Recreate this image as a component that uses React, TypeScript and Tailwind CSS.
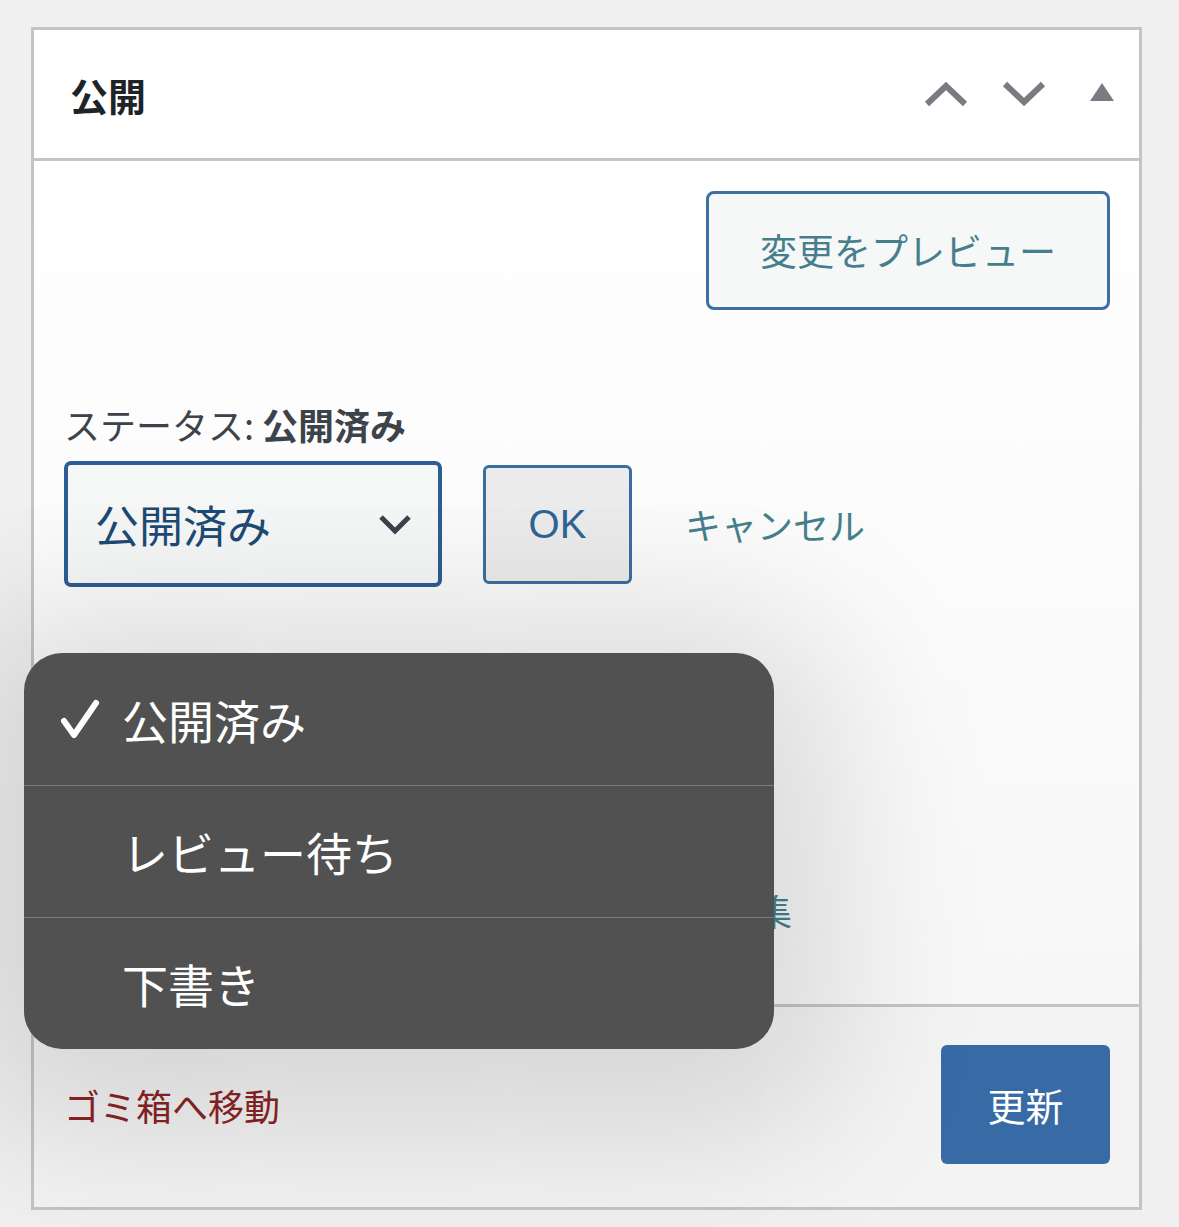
const jp = "font-['Noto_Sans_CJK_JP','Noto_Sans',sans-serif]";

const options = [
  { label: "公開済み", checked: true },
  { label: "レビュー待ち", checked: false },
  { label: "下書き", checked: false },
];

function Chevron({ up }: { up?: boolean }) {
  return (
    <svg width="44" height="28" viewBox="0 0 44 28" fill="none">
      <polyline
        points={up ? "3,24 22,6 41,24" : "3,4 22,22 41,4"}
        stroke="#787c82"
        strokeWidth="6"
        strokeLinejoin="miter"
      />
    </svg>
  );
}

export default function App() {
  return (
    <div className={`min-h-[1227px] bg-[#f0f0f1] pt-[27px] pl-[31px] ${jp}`}>
      <div className="relative w-[1111px] border-[3px] border-[#c3c4c7] bg-white">
        {/* Header */}
        <div className="flex h-[131px] items-center justify-between border-b-[3px] border-[#c3c4c7] pl-[36px] pr-[24px]">
          <h2 className="text-[38px] font-bold text-[#1d2327]">公開</h2>
          <div className="flex items-center">
            <Chevron up />
            <span className="ml-[34px]">
              <Chevron />
            </span>
            <svg className="ml-[43px] mb-[4px]" width="26" height="20" viewBox="0 0 26 20">
              <polygon points="13,1 25,19 1,19" fill="#787c82" />
            </svg>
          </div>
        </div>

        {/* Body */}
        <div className="h-[843px] bg-gradient-to-b from-white to-[#f7f7f7] pl-[30px] pr-[29px] pt-[30px]">
          <div className="flex justify-end">
            <button className="h-[119px] w-[404px] rounded-[8px] border-[3px] border-[#3e6fa0] bg-[#f6f7f7] text-[37px] text-[#457f8d]">
              変更をプレビュー
            </button>
          </div>

          <p className="mt-[92px] text-[36px] leading-[44px] text-[#3c434a]">
            ステータス: <span className="font-bold">公開済み</span>
          </p>

          <div className="mt-[15px] flex items-center">
            <div className="flex h-[126px] w-[378px] items-center justify-between rounded-[7px] border-[4px] border-[#2c5e93] bg-[#f6f7f7] pl-[27px] pr-[26px]">
              <span className="text-[44px] text-[#1d4a75]">公開済み</span>
              <svg width="34" height="22" viewBox="0 0 34 22" fill="none">
                <polyline points="3,4 17,18 31,4" stroke="#3c434a" strokeWidth="5" />
              </svg>
            </div>
            <button className="ml-[41px] h-[119px] w-[149px] rounded-[6px] border-[3px] border-[#3b6ea0] bg-[#ececec] font-['Liberation_Sans',sans-serif] text-[40px] text-[#2f6496]">
              OK
            </button>
            <a className="ml-[53px] text-[36px] text-[#457f8d]">キャンセル</a>
          </div>

          <div className="mt-[296px] flex pl-[656px]">
            <a className="text-[36px] text-[#457f8d]">編集</a>
          </div>
        </div>

        {/* Footer */}
        <div className="flex h-[203px] items-center justify-between border-t-[3px] border-[#c3c4c7] bg-[#f3f3f3] pl-[30px] pr-[29px] pb-[6px]">
          <a className="mt-[2px] text-[36px] text-[#8a2424]">ゴミ箱へ移動</a>
          <button className="h-[119px] w-[169px] rounded-[6px] bg-[#386ba6] text-[38px] text-white">更新</button>
        </div>

        {/* Native select menu */}
        <div className="absolute left-[-10px] top-[623px] w-[750px] overflow-hidden rounded-[38px] bg-[#515151] shadow-[0_20px_160px_60px_rgba(0,0,0,0.13)]">
          {options.map((o, i) => (
            <div
              key={o.label}
              className={`flex h-[132px] items-center ${i > 0 ? "border-t border-[#7d7d7d]" : ""}`}
            >
              <span className="flex w-[98px] justify-end pr-[22px]">
                {o.checked && (
                  <svg width="40" height="40" viewBox="0 0 40 40" fill="none">
                    <path d="M4 22 L14 36 L36 4" stroke="white" strokeWidth="6" strokeLinecap="round" strokeLinejoin="round" />
                  </svg>
                )}
              </span>
              <span className="text-[46px] text-white">{o.label}</span>
            </div>
          ))}
        </div>
      </div>
    </div>
  );
}
